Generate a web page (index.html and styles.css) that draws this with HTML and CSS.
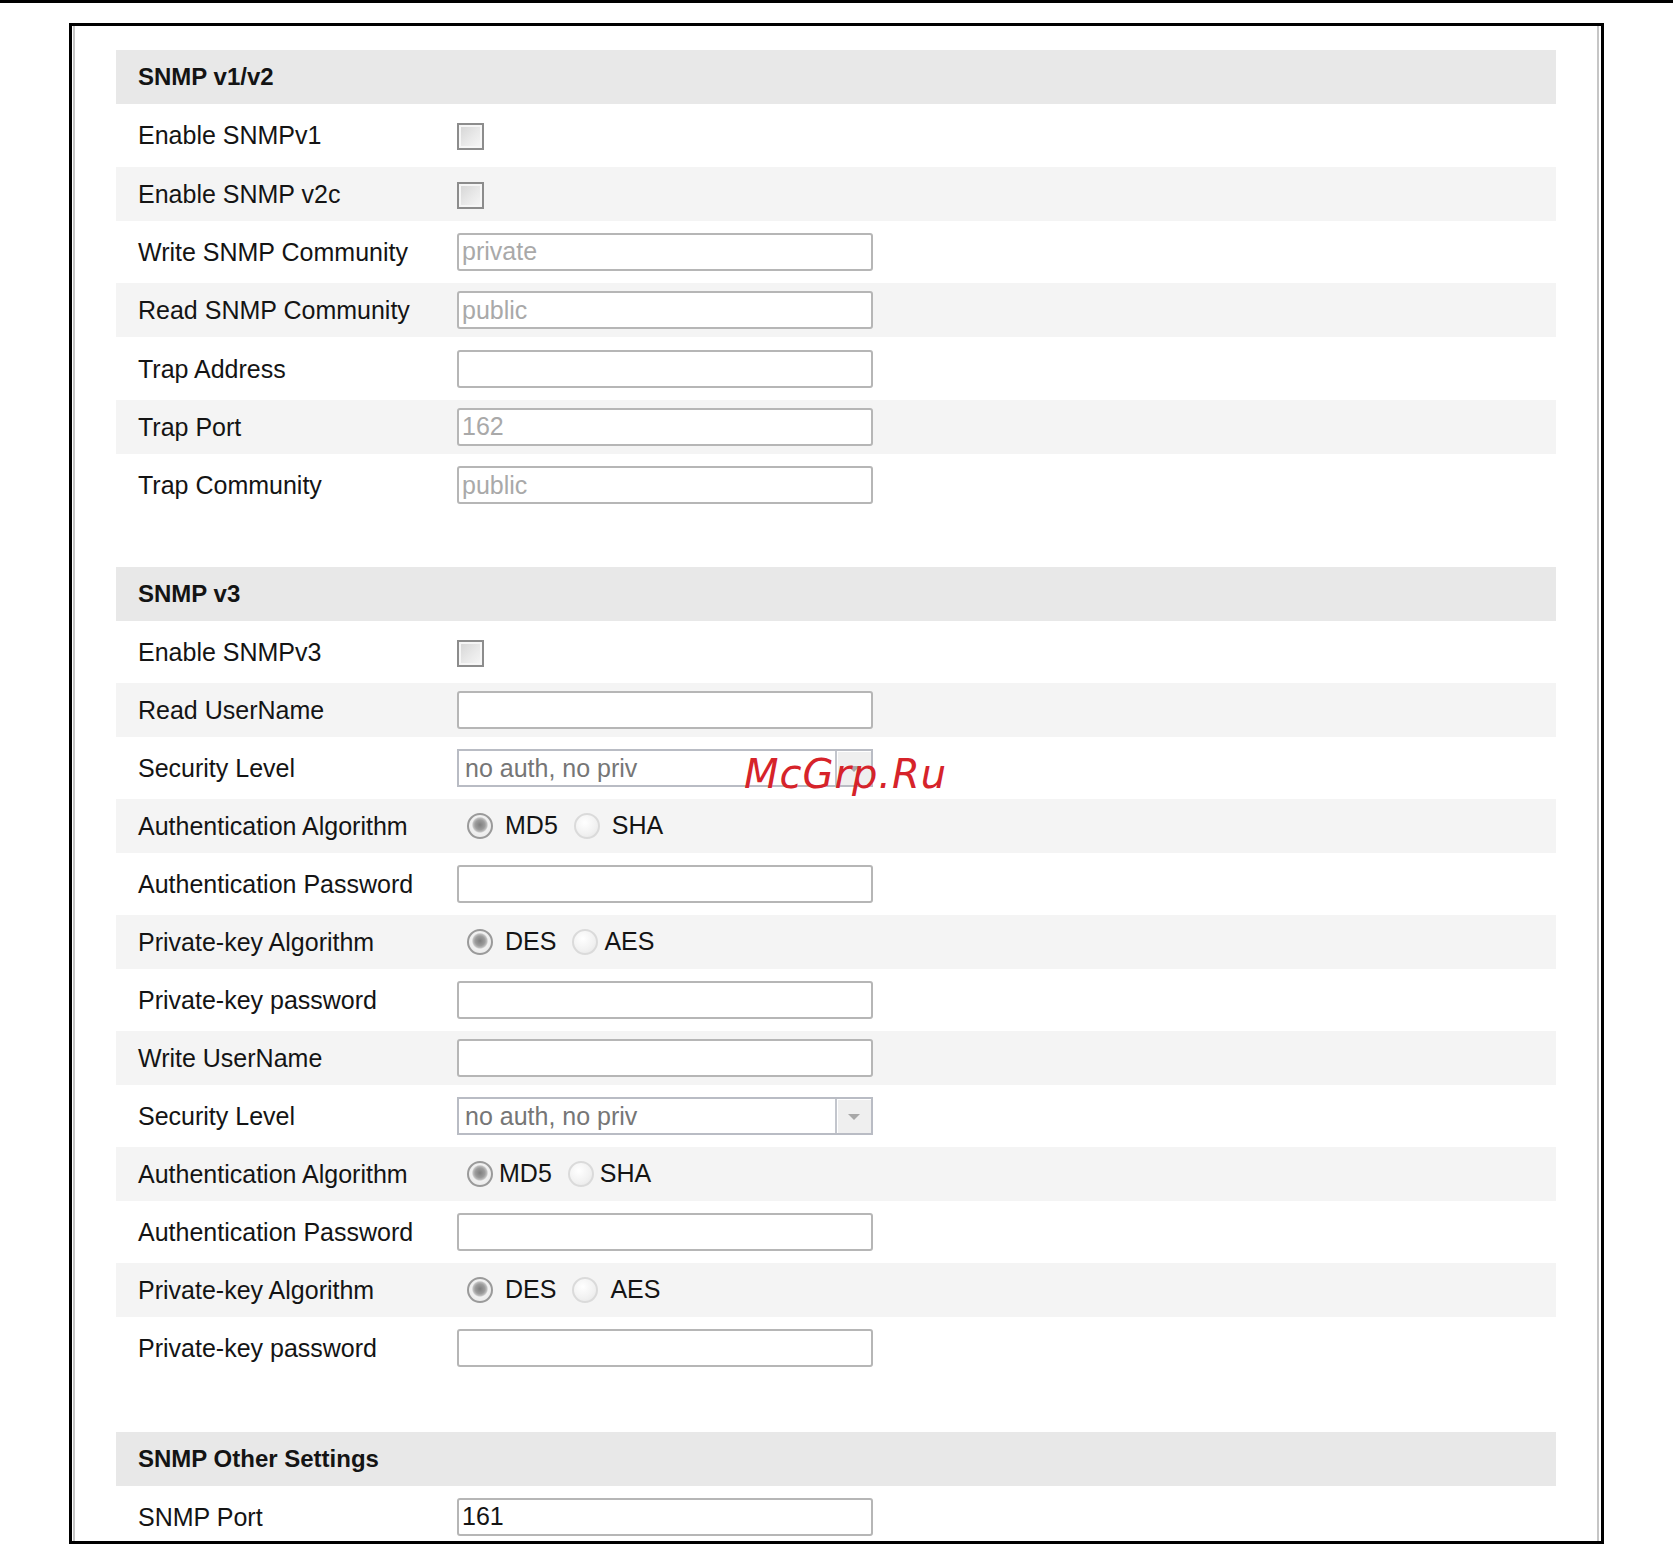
FILE: index.html
```html
<!DOCTYPE html>
<html lang="en">
<head>
<meta charset="utf-8">
<title>SNMP</title>
<link rel="stylesheet" href="styles.css">
</head>
<body>
<div class="topbar"></div>
<div class="frame">
  <div class="inner">
    <section class="sec sec-v12">
      <div class="head">SNMP v1/v2</div>
      <div class="row"><div class="lbl">Enable SNMPv1</div><div class="ctl"><span class="cb"></span></div></div>
      <div class="row"><div class="lbl">Enable SNMP v2c</div><div class="ctl"><span class="cb"></span></div></div>
      <div class="row"><div class="lbl">Write SNMP Community</div><div class="ctl"><input class="txt dim" type="text" value="private" readonly></div></div>
      <div class="row"><div class="lbl">Read SNMP Community</div><div class="ctl"><input class="txt dim" type="text" value="public" readonly></div></div>
      <div class="row"><div class="lbl">Trap Address</div><div class="ctl"><input class="txt" type="text" value="" readonly></div></div>
      <div class="row"><div class="lbl">Trap Port</div><div class="ctl"><input class="txt dim" type="text" value="162" readonly></div></div>
      <div class="row"><div class="lbl">Trap Community</div><div class="ctl"><input class="txt dim" type="text" value="public" readonly></div></div>
    </section>

    <section class="sec sec-v3">
      <div class="head">SNMP v3</div>
      <div class="row"><div class="lbl">Enable SNMPv3</div><div class="ctl"><span class="cb"></span></div></div>
      <div class="row"><div class="lbl">Read UserName</div><div class="ctl"><input class="txt" type="text" value="" readonly></div></div>
      <div class="row"><div class="lbl">Security Level</div><div class="ctl"><div class="sel"><span class="sel-text">no auth, no priv</span><span class="sel-btn"><span class="arrow"></span></span></div></div></div>
      <div class="row"><div class="lbl">Authentication Algorithm</div><div class="ctl radios"><span class="rd on"></span><span class="rl">MD5</span><span class="rd"></span><span class="rl">SHA</span></div></div>
      <div class="row"><div class="lbl">Authentication Password</div><div class="ctl"><input class="txt" type="text" value="" readonly></div></div>
      <div class="row"><div class="lbl">Private-key Algorithm</div><div class="ctl radios"><span class="rd on"></span><span class="rl">DES</span><span class="rd"></span><span class="rl tight">AES</span></div></div>
      <div class="row"><div class="lbl">Private-key password</div><div class="ctl"><input class="txt" type="text" value="" readonly></div></div>
      <div class="row"><div class="lbl">Write UserName</div><div class="ctl"><input class="txt" type="text" value="" readonly></div></div>
      <div class="row"><div class="lbl">Security Level</div><div class="ctl"><div class="sel"><span class="sel-text">no auth, no priv</span><span class="sel-btn"><span class="arrow"></span></span></div></div></div>
      <div class="row"><div class="lbl">Authentication Algorithm</div><div class="ctl radios"><span class="rd on"></span><span class="rl tight">MD5</span><span class="rd"></span><span class="rl tight">SHA</span></div></div>
      <div class="row"><div class="lbl">Authentication Password</div><div class="ctl"><input class="txt" type="text" value="" readonly></div></div>
      <div class="row"><div class="lbl">Private-key Algorithm</div><div class="ctl radios"><span class="rd on"></span><span class="rl">DES</span><span class="rd"></span><span class="rl">AES</span></div></div>
      <div class="row"><div class="lbl">Private-key password</div><div class="ctl"><input class="txt" type="text" value="" readonly></div></div>
    </section>

    <section class="sec sec-other">
      <div class="head">SNMP Other Settings</div>
      <div class="row"><div class="lbl">SNMP Port</div><div class="ctl"><input class="txt" type="text" value="161" readonly></div></div>
    </section>
  </div>
  <div class="watermark">McGrp.Ru</div>
</div>
</body>
</html>
```

FILE: styles.css
```css
html, body {
  margin: 0;
  padding: 0;
  background: #ffffff;
}

body {
  font-family: "Liberation Sans", Arial, sans-serif;
  color: #141414;
  overflow: hidden;
}

.topbar {
  height: 3px;
  background: #000000;
}

.frame {
  position: relative;
  box-sizing: border-box;
  margin: 20px 0 0 69px;
  width: 1535px;
  height: 1521px;
  border: 3px solid #000000;
  overflow: hidden;
}

.inner {
  box-sizing: border-box;
  height: 100%;
  margin: 0 2px 0 1px;
  border-left: 2px solid #c6c6c6;
  border-right: 2px solid #c6c6c6;
  padding: 24px 0 0 41px;
}

.sec {
  display: flex;
  flex-direction: column;
  width: 1440px;
  gap: 4px;
}

.sec-v12 {
  gap: 4.33px;
  margin-bottom: 54.4px;
}

.sec-v3 {
  margin-bottom: 57px;
}

.head {
  height: 54px;
  line-height: 54px;
  padding-left: 22px;
  background: #e8e8e8;
  font-size: 24px;
  font-weight: bold;
  color: #141414;
}

.row {
  display: flex;
  align-items: center;
  height: 54px;
  background: #ffffff;
}

.row:nth-child(odd) {
  background: #f4f4f4;
}

.lbl {
  box-sizing: border-box;
  width: 341px;
  padding-left: 22px;
  font-size: 25px;
  line-height: 54px;
  white-space: nowrap;
  color: #141414;
}

.ctl {
  display: flex;
  align-items: center;
}

/* checkbox */
.cb {
  box-sizing: border-box;
  width: 27px;
  height: 27px;
  margin-top: 3px;
  border: 2px solid #8c8c8c;
  box-shadow: inset 0 0 0 2px #f6f6f6;
  background: linear-gradient(135deg, #d4d4d4 0%, #e9e9e9 55%, #f7f7f7 100%);
}

/* text inputs */
.txt {
  box-sizing: border-box;
  width: 416px;
  height: 38px;
  margin: 0;
  padding: 0 0 0 3px;
  border: 2px solid #b6b6b6;
  border-radius: 3px;
  background: #ffffff;
  font-family: "Liberation Sans", Arial, sans-serif;
  font-size: 25px;
  color: #141414;
  outline: none;
}

.txt.dim {
  color: #a9a9a9;
}

/* select */
.sel {
  box-sizing: border-box;
  display: flex;
  width: 416px;
  height: 38px;
  border: 2px solid #b9bcc4;
  background: #ffffff;
}

.sel-text {
  flex: 1;
  padding-left: 6px;
  font-size: 25px;
  line-height: 34px;
  color: #767676;
}

.sel-btn {
  box-sizing: border-box;
  display: flex;
  align-items: center;
  justify-content: center;
  width: 36px;
  height: 34px;
  border-left: 2px solid #c3c6cd;
  box-shadow: inset 1px 1px 0 #ffffff;
  background: #efefef;
}

.arrow {
  width: 0;
  height: 0;
  border-left: 6px solid transparent;
  border-right: 6px solid transparent;
  border-top: 6px solid #a8a8a8;
  margin-top: 2px;
}

/* radios */
.radios {
  padding-left: 10px;
}

.rd {
  box-sizing: border-box;
  width: 26px;
  height: 26px;
  border-radius: 50%;
  border: 2px solid #dadada;
  background: radial-gradient(circle at 40% 35%, #ffffff 0%, #f1f1f1 60%, #e4e4e4 100%);
}

.rd.on {
  border-color: #9a9a9a;
  background: radial-gradient(circle at 50% 45%, #7e7e7e 0%, #9c9c9c 30%, #bdbdbd 42%, #f1f1f1 50%, #e6e6e6 100%);
}

.rl {
  margin-left: 12px;
  margin-right: 16px;
  font-size: 25px;
  color: #141414;
}

.rl.tight {
  margin-left: 6px;
}

/* watermark overlay */
.watermark {
  position: absolute;
  left: 672px;
  top: 728px;
  font-family: "DejaVu Sans", Verdana, sans-serif;
  font-style: oblique;
  font-size: 40px;
  line-height: 40px;
  letter-spacing: 1px;
  color: #d6232a;
  white-space: nowrap;
}
```
